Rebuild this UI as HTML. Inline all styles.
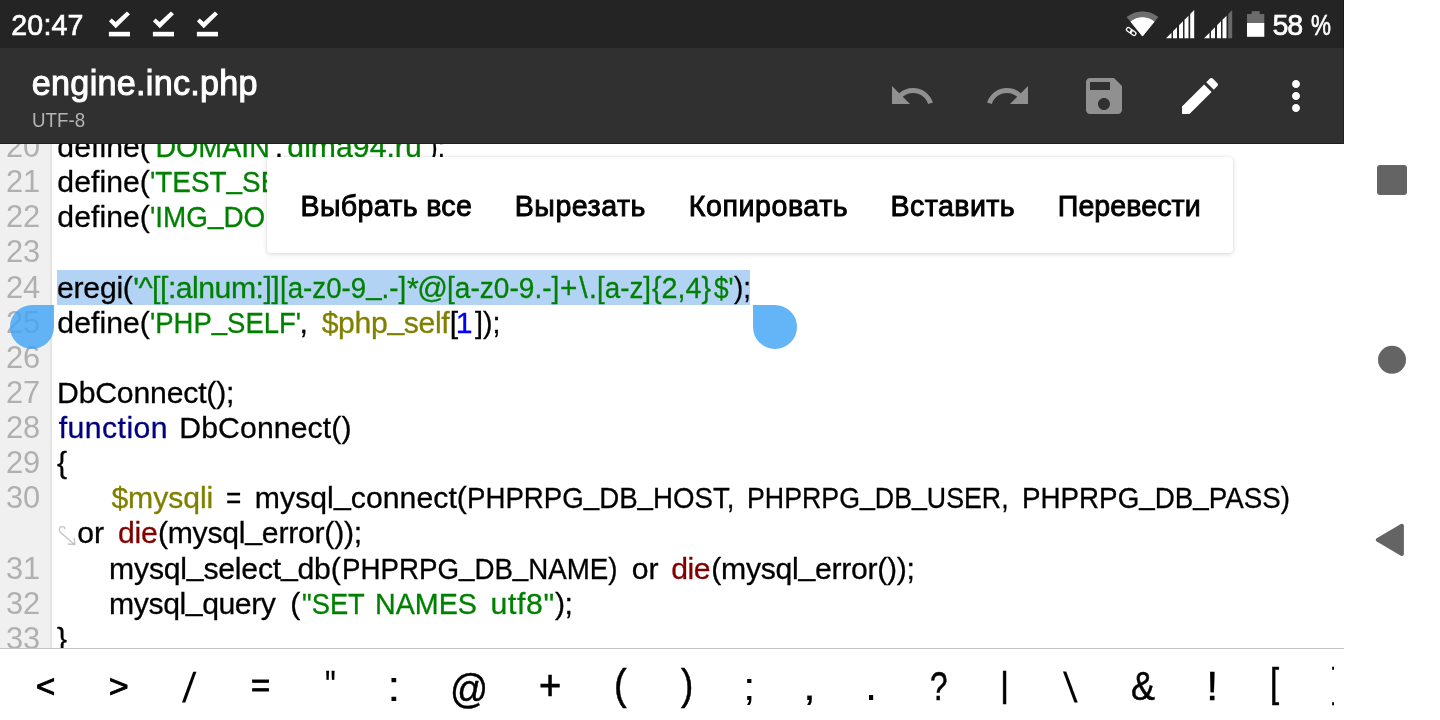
<!DOCTYPE html>
<html lang="ru">
<head>
<meta charset="utf-8">
<title>engine.inc.php</title>
<style>
html,body{margin:0;padding:0;}
body{width:1440px;height:720px;overflow:hidden;background:#fff;position:relative;font-family:"Liberation Sans",sans-serif;}
.L{position:absolute;left:0;top:0;will-change:transform;}
.t{position:absolute;white-space:pre;line-height:60px;font-family:"Liberation Sans",sans-serif;}
.u{position:relative;top:-3.8px;}
#status{position:absolute;left:0;top:0;width:1344px;height:48px;background:#242424;box-sizing:border-box;border-right:1px solid #181818;overflow:hidden;}
#appbar{position:absolute;left:0;top:48px;width:1344px;height:96px;box-sizing:border-box;border-bottom:1px solid #1f1f1f;border-right:1px solid #222;background:#303030;}
#editor{position:absolute;left:0;top:144px;width:1344px;height:504px;background:#fff;overflow:hidden;}
#gutter{position:absolute;left:0;top:0;width:52px;height:504px;background:#f0f0f0;border-right:2px solid #e5e5e5;box-sizing:border-box;}
#sel{position:absolute;left:57px;top:126px;width:693px;height:35px;background:#b3d3f4;}
.handle{position:absolute;width:44px;height:44px;background:rgba(66,165,245,.82);top:161px;}
#hl{left:10px;border-radius:22px 0 22px 22px;}
#hr{left:753px;border-radius:0 22px 22px 22px;}
#popup{position:absolute;left:267px;top:13px;width:966px;height:96px;background:#fff;border-radius:4px;box-shadow:0 1px 5px rgba(0,0,0,.16),0 0 2px rgba(0,0,0,.08);}
#symbols{position:absolute;left:0;top:648px;width:1344px;height:72px;background:#fff;border-top:1px solid #c4c4c4;box-sizing:border-box;overflow:hidden;}
#symclip{position:absolute;left:0;top:0;width:1334px;height:72px;overflow:hidden;}
#nav{position:absolute;left:1344px;top:0;width:96px;height:720px;background:#fff;}
svg{position:absolute;overflow:visible;}
</style>
</head>
<body>
<div id="editor">
<div id="gutter"></div>
<div id="sel"></div>
<div class="L" style="width:1344px;height:504px">
<span class="t" style="left:57.36px;top:-27px;font-size:30.2px;color:#000;letter-spacing:0.034px;-webkit-text-stroke:0.3px #000;">define(</span>
<span class="t" style="left:150.16px;top:-27px;font-size:30.2px;color:#008000;transform:scaleX(0.9467);transform-origin:0 0;-webkit-text-stroke:0.3px #008000;">'DOMAIN'</span>
<span class="t" style="left:274.64px;top:-27px;font-size:30.2px;color:#000;-webkit-text-stroke:0.3px #000;">,</span>
<span class="t" style="left:281.58px;top:-27px;font-size:30.2px;color:#008000;letter-spacing:0.011px;-webkit-text-stroke:0.3px #008000;">'dima94.ru'</span>
<span class="t" style="left:429.00px;top:-27px;font-size:30.2px;color:#000;transform:scaleX(0.8647);transform-origin:0 0;-webkit-text-stroke:0.3px #000;">);</span>
<span class="t" style="left:57.36px;top:8px;font-size:30.2px;color:#000;letter-spacing:0.034px;-webkit-text-stroke:0.3px #000;">define(</span>
<span class="t" style="left:149.79px;top:8px;font-size:30.2px;color:#008000;transform:scaleX(0.9232);transform-origin:0 0;-webkit-text-stroke:0.3px #008000;">'TEST<span class="u">_</span>SERVER',</span>
<span class="t" style="left:57.36px;top:43px;font-size:30.2px;color:#000;letter-spacing:0.034px;-webkit-text-stroke:0.3px #000;">define(</span>
<span class="t" style="left:149.79px;top:43px;font-size:30.2px;color:#008000;transform:scaleX(0.9228);transform-origin:0 0;-webkit-text-stroke:0.3px #008000;">'IMG<span class="u">_</span>DOMAIN',</span>
<span class="t" style="left:57.06px;top:114px;font-size:30.2px;color:#000;letter-spacing:-0.264px;-webkit-text-stroke:0.3px #000;">eregi(</span>
<span class="t" style="left:133.18px;top:114px;font-size:30.2px;color:#008000;letter-spacing:-0.494px;-webkit-text-stroke:0.3px #008000;">'^[[:alnum:]]</span>
<span class="t" style="left:280.37px;top:114px;font-size:30.2px;color:#008000;transform:scaleX(0.9167);transform-origin:0 0;-webkit-text-stroke:0.3px #008000;">[a-z0-9<span class="u">_</span>.-]</span>
<span class="t" style="left:406.93px;top:114px;font-size:30.2px;color:#008000;letter-spacing:-1.393px;-webkit-text-stroke:0.3px #008000;">*@</span>
<span class="t" style="left:447.04px;top:114px;font-size:30.2px;color:#008000;transform:scaleX(0.9304);transform-origin:0 0;-webkit-text-stroke:0.3px #008000;">[a-z0-9.-]</span>
<span class="t" style="left:559.50px;top:114px;font-size:30.2px;color:#008000;transform:scaleX(0.9868);transform-origin:0 0;-webkit-text-stroke:0.3px #008000;">+</span>
<span class="t" style="left:579.20px;top:114px;font-size:30.2px;color:#008000;-webkit-text-stroke:0.3px #008000;">\</span>
<span class="t" style="left:588.69px;top:114px;font-size:30.2px;color:#008000;-webkit-text-stroke:0.3px #008000;">.</span>
<span class="t" style="left:597.26px;top:114px;font-size:30.2px;color:#008000;transform:scaleX(0.9208);transform-origin:0 0;-webkit-text-stroke:0.3px #008000;">[a-z]</span>
<span class="t" style="left:652.45px;top:114px;font-size:30.2px;color:#008000;transform:scaleX(0.9511);transform-origin:0 0;-webkit-text-stroke:0.3px #008000;">{2,4}</span>
<span class="t" style="left:713.80px;top:114px;font-size:30.2px;color:#008000;transform:scaleX(0.8697);transform-origin:0 0;-webkit-text-stroke:0.3px #008000;">$'</span>
<span class="t" style="left:734.40px;top:114px;font-size:30.2px;color:#000;transform:scaleX(0.9203);transform-origin:0 0;-webkit-text-stroke:0.3px #000;">);</span>
<span class="t" style="left:57.36px;top:149px;font-size:30.2px;color:#000;letter-spacing:0.034px;-webkit-text-stroke:0.3px #000;">define(</span>
<span class="t" style="left:150.01px;top:149px;font-size:30.2px;color:#008000;transform:scaleX(0.9109);transform-origin:0 0;-webkit-text-stroke:0.3px #008000;">'PHP<span class="u">_</span>SELF'</span>
<span class="t" style="left:299.60px;top:149px;font-size:30.2px;color:#000;-webkit-text-stroke:0.3px #000;">,</span>
<span class="t" style="left:321.70px;top:149px;font-size:30.2px;color:#808000;letter-spacing:-0.360px;-webkit-text-stroke:0.3px #808000;">$php<span class="u">_</span>self</span>
<span class="t" style="left:449.76px;top:149px;font-size:30.2px;color:#000;-webkit-text-stroke:0.3px #000;">[</span>
<span class="t" style="left:455.87px;top:149px;font-size:30.2px;color:#0000ff;-webkit-text-stroke:0.3px #0000ff;">1</span>
<span class="t" style="left:475.20px;top:149px;font-size:30.2px;color:#000;transform:scaleX(0.9479);transform-origin:0 0;-webkit-text-stroke:0.3px #000;">]);</span>
<span class="t" style="left:57.04px;top:219px;font-size:30.2px;color:#000;letter-spacing:-0.189px;-webkit-text-stroke:0.3px #000;">DbConnect();</span>
<span class="t" style="left:58.70px;top:254px;font-size:30.2px;color:#000080;letter-spacing:0.460px;-webkit-text-stroke:0.3px #000080;">function</span>
<span class="t" style="left:179.34px;top:254px;font-size:30.2px;color:#000;letter-spacing:0.102px;-webkit-text-stroke:0.3px #000;">DbConnect()</span>
<span class="t" style="left:56.93px;top:289px;font-size:30.2px;color:#000;-webkit-text-stroke:0.3px #000;">{</span>
<span class="t" style="left:111.40px;top:324px;font-size:30.2px;color:#808000;letter-spacing:-0.079px;-webkit-text-stroke:0.3px #808000;">$mysqli</span>
<span class="t" style="left:226.27px;top:324px;font-size:30.2px;color:#000;transform:scaleX(0.8675);transform-origin:0 0;-webkit-text-stroke:0.3px #000;">=</span>
<span class="t" style="left:254.81px;top:324px;font-size:30.2px;color:#000;letter-spacing:0.050px;-webkit-text-stroke:0.3px #000;">mysql<span class="u">_</span>connect(</span>
<span class="t" style="left:467.34px;top:324px;font-size:30.2px;color:#000;transform:scaleX(0.9161);transform-origin:0 0;-webkit-text-stroke:0.3px #000;">PHPRPG<span class="u">_</span>DB<span class="u">_</span>HOST,</span>
<span class="t" style="left:747.21px;top:324px;font-size:30.2px;color:#000;transform:scaleX(0.8859);transform-origin:0 0;-webkit-text-stroke:0.3px #000;">PHPRPG<span class="u">_</span>DB<span class="u">_</span>USER,</span>
<span class="t" style="left:1022.33px;top:324px;font-size:30.2px;color:#000;transform:scaleX(0.9195);transform-origin:0 0;-webkit-text-stroke:0.3px #000;">PHPRPG<span class="u">_</span>DB<span class="u">_</span>PASS)</span>
<span class="t" style="left:77.16px;top:359px;font-size:30.2px;color:#000;letter-spacing:0.139px;-webkit-text-stroke:0.3px #000;">or</span>
<span class="t" style="left:118.06px;top:359px;font-size:30.2px;color:#800000;letter-spacing:-0.217px;-webkit-text-stroke:0.3px #800000;">die</span>
<span class="t" style="left:157.88px;top:359px;font-size:30.2px;color:#000;letter-spacing:-0.244px;-webkit-text-stroke:0.3px #000;">(mysql<span class="u">_</span>error());</span>
<span class="t" style="left:109.11px;top:395px;font-size:30.2px;color:#000;letter-spacing:-0.224px;-webkit-text-stroke:0.3px #000;">mysql<span class="u">_</span>select<span class="u">_</span>db(</span>
<span class="t" style="left:341.54px;top:395px;font-size:30.2px;color:#000;transform:scaleX(0.9175);transform-origin:0 0;-webkit-text-stroke:0.3px #000;">PHPRPG<span class="u">_</span>DB<span class="u">_</span>NAME)</span>
<span class="t" style="left:631.66px;top:395px;font-size:30.2px;color:#000;letter-spacing:0.139px;-webkit-text-stroke:0.3px #000;">or</span>
<span class="t" style="left:671.36px;top:395px;font-size:30.2px;color:#800000;letter-spacing:-0.567px;-webkit-text-stroke:0.3px #800000;">die</span>
<span class="t" style="left:711.28px;top:395px;font-size:30.2px;color:#000;letter-spacing:-0.291px;-webkit-text-stroke:0.3px #000;">(mysql<span class="u">_</span>error());</span>
<span class="t" style="left:109.11px;top:430px;font-size:30.2px;color:#000;letter-spacing:-0.431px;-webkit-text-stroke:0.3px #000;">mysql<span class="u">_</span>query</span>
<span class="t" style="left:290.28px;top:430px;font-size:30.2px;color:#000;-webkit-text-stroke:0.3px #000;">(</span>
<span class="t" style="left:301.65px;top:430px;font-size:30.2px;color:#008000;transform:scaleX(0.9045);transform-origin:0 0;-webkit-text-stroke:0.3px #008000;">"SET</span>
<span class="t" style="left:375.26px;top:430px;font-size:30.2px;color:#008000;transform:scaleX(0.9492);transform-origin:0 0;-webkit-text-stroke:0.3px #008000;">NAMES</span>
<span class="t" style="left:490.61px;top:430px;font-size:30.2px;color:#008000;letter-spacing:0.644px;-webkit-text-stroke:0.3px #008000;">utf8"</span>
<span class="t" style="left:555.00px;top:430px;font-size:30.2px;color:#000;letter-spacing:-0.491px;-webkit-text-stroke:0.3px #000;">);</span>
<span class="t" style="left:56.93px;top:465px;font-size:30.2px;color:#000;-webkit-text-stroke:0.3px #000;">}</span>
<span class="t" style="left:5.90px;top:-27px;font-size:30.8px;color:#b0b0b0;">20</span>
<span class="t" style="left:5.90px;top:8px;font-size:30.8px;color:#b0b0b0;">21</span>
<span class="t" style="left:5.90px;top:43px;font-size:30.8px;color:#b0b0b0;">22</span>
<span class="t" style="left:5.90px;top:78px;font-size:30.8px;color:#b0b0b0;">23</span>
<span class="t" style="left:5.90px;top:114px;font-size:30.8px;color:#b0b0b0;">24</span>
<span class="t" style="left:5.90px;top:149px;font-size:30.8px;color:#b0b0b0;">25</span>
<span class="t" style="left:5.90px;top:184px;font-size:30.8px;color:#b0b0b0;">26</span>
<span class="t" style="left:5.90px;top:219px;font-size:30.8px;color:#b0b0b0;">27</span>
<span class="t" style="left:5.90px;top:254px;font-size:30.8px;color:#b0b0b0;">28</span>
<span class="t" style="left:5.90px;top:289px;font-size:30.8px;color:#b0b0b0;">29</span>
<span class="t" style="left:5.90px;top:324px;font-size:30.8px;color:#b0b0b0;">30</span>
<span class="t" style="left:5.90px;top:395px;font-size:30.8px;color:#b0b0b0;">31</span>
<span class="t" style="left:5.90px;top:430px;font-size:30.8px;color:#b0b0b0;">32</span>
<span class="t" style="left:5.90px;top:465px;font-size:30.8px;color:#b0b0b0;">33</span>
</div>
<svg style="left:52px;top:372px" width="30" height="30" viewBox="52 515.5 30 30"><path d="M65 528 C64.3 525.4 59.4 525.3 59.3 529.2 C59.3 531 60.6 532.1 62 533.3 L74.5 543.9 M68.1 543.5 L74.9 544 L74.2 537.9" stroke="#c4c4c4" stroke-width="1.35" fill="none" stroke-linecap="round" stroke-linejoin="round"/></svg>
<div class="handle" id="hl"></div>
<div class="handle" id="hr"></div>
<div id="popup">
<div class="L" style="width:966px;height:96px">
<span class="t" style="left:33.57px;top:19px;font-size:28.6px;color:#000;letter-spacing:0.307px;-webkit-text-stroke:0.9px #000;">Выбрать все</span>
<span class="t" style="left:247.77px;top:19px;font-size:28.6px;color:#000;letter-spacing:0.511px;-webkit-text-stroke:0.9px #000;">Вырезать</span>
<span class="t" style="left:421.77px;top:19px;font-size:28.6px;color:#000;letter-spacing:0.555px;-webkit-text-stroke:0.9px #000;">Копировать</span>
<span class="t" style="left:623.47px;top:19px;font-size:28.6px;color:#000;letter-spacing:0.436px;-webkit-text-stroke:0.9px #000;">Вставить</span>
<span class="t" style="left:790.77px;top:19px;font-size:28.6px;color:#000;letter-spacing:0.060px;-webkit-text-stroke:0.9px #000;">Перевести</span>
</div>
</div>
</div>
<div id="status">
<svg style="left:0;top:0" width="1344" height="48" viewBox="0 0 1344 48">
<g fill="#fff">
<g id="chk"><rect x="108.9" y="31.8" width="21.1" height="4.6"/><polygon points="108.9,21.2 111.7,18.6 115.6,22.1 126.9,11.5 130,14.3 115.8,28.3"/></g>
<g transform="translate(44,0)"><rect x="108.9" y="31.8" width="21.1" height="4.6"/><polygon points="108.9,21.2 111.7,18.6 115.6,22.1 126.9,11.5 130,14.3 115.8,28.3"/></g>
<g transform="translate(88,0)"><rect x="108.9" y="31.8" width="21.1" height="4.6"/><polygon points="108.9,21.2 111.7,18.6 115.6,22.1 126.9,11.5 130,14.3 115.8,28.3"/></g>
</g>
<!-- wifi -->
<path d="M1142.5 36.3 L1127 17.1 A 24.8 24.8 0 0 1 1158 17.1 Z" fill="#6e6e6e" stroke="#6e6e6e" stroke-width="0.6" stroke-linejoin="round"/>
<path d="M1142.5 36 L1130.9 21.7 A 18.5 18.5 0 0 1 1154.1 21.7 Z" fill="#fff" stroke="#fff" stroke-width="0.8" stroke-linejoin="round"/>
<g transform="translate(1131.2,31.5) rotate(36)" fill="none"><g stroke="#242424" stroke-width="3.6"><rect x="-5.4" y="-1.9" width="6" height="3.8" rx="1.9"/><rect x="-0.6" y="-1.9" width="6" height="3.8" rx="1.9"/></g><g stroke="#fff" stroke-width="1.25"><rect x="-5.4" y="-1.9" width="6" height="3.8" rx="1.9"/><rect x="-0.6" y="-1.9" width="6" height="3.8" rx="1.9"/></g></g>
<!-- signal 1 -->
<polygon points="1166.0,38.2 1171.5,38.2 1171.5,32.7" fill="#fff"/>
<polygon points="1173.0,38.2 1177.0,38.2 1177.0,27.2 1173.0,31.2" fill="#fff"/>
<polygon points="1179.0,38.2 1183.0,38.2 1183.0,21.2 1179.0,25.2" fill="#fff"/>
<polygon points="1184.5,38.2 1188.5,38.2 1188.5,15.7 1184.5,19.7" fill="#fff"/>
<polygon points="1190.2,38.2 1194.2,38.2 1194.2,10.0 1190.2,14.0" fill="#fff"/>
<polygon points="1204.0,38.2 1209.5,38.2 1209.5,32.7" fill="#fff"/>
<polygon points="1211.0,38.2 1215.0,38.2 1215.0,27.2 1211.0,31.2" fill="#fff"/>
<polygon points="1217.0,38.2 1221.0,38.2 1221.0,21.2 1217.0,25.2" fill="#fff"/>
<polygon points="1222.5,38.2 1226.5,38.2 1226.5,15.7 1222.5,19.7" fill="#fff"/>
<polygon points="1228.2,38.2 1232.2,38.2 1232.2,10.0 1228.2,14.0" fill="#686868"/>
<!-- battery -->
<rect x="1251.7" y="11.2" width="8" height="3.2" fill="#6b6b6b"/>
<rect x="1247" y="14" width="17.3" height="9.2" fill="#6b6b6b"/>
<rect x="1247" y="23" width="17.3" height="13.8" fill="#fff"/>
</svg>
</div>
<div id="appbar" style="top:48px">
<svg style="left:888px;top:24px" width="48" height="48" viewBox="0 0 24 24"><path fill="#909090" d="M12.5 8c-2.65 0-5.05.99-6.9 2.6L2 7v9h9l-3.62-3.62c1.39-1.16 3.16-1.88 5.12-1.88 3.54 0 6.55 2.31 7.6 5.5l2.37-.78C21.08 11.03 17.15 8 12.5 8z"/></svg>
<svg style="left:984px;top:24px" width="48" height="48" viewBox="0 0 24 24"><path fill="#909090" d="M18.4 10.6C16.55 8.99 14.15 8 11.5 8c-4.65 0-8.58 3.03-9.96 7.22L3.9 16c1.05-3.19 4.05-5.5 7.6-5.5 1.95 0 3.73.72 5.12 1.88L13 16h9V7l-3.6 3.6z"/></svg>
<svg style="left:1080px;top:24px" width="48" height="48" viewBox="0 0 24 24"><path fill="#909090" d="M17 3H5c-1.11 0-2 .9-2 2v14c0 1.1.89 2 2 2h14c1.1 0 2-.9 2-2V7l-4-4zm-5 16c-1.66 0-3-1.34-3-3s1.34-3 3-3 3 1.34 3 3-1.34 3-3 3zm3-10H5V5h10v4z"/></svg>
<svg style="left:1176px;top:24px" width="48" height="48" viewBox="0 0 24 24"><path fill="#fff" d="M3 17.25V21h3.75L17.81 9.94l-3.75-3.75L3 17.25zM20.71 7.04c.39-.39.39-1.02 0-1.41l-2.34-2.34c-.39-.39-1.02-.39-1.41 0l-1.83 1.83 3.75 3.75 1.83-1.83z"/></svg>
<svg style="left:1272px;top:24px" width="48" height="48" viewBox="0 0 24 24"><path fill="#fff" d="M12 8c1.1 0 2-.9 2-2s-.9-2-2-2-2 .9-2 2 .9 2 2 2zm0 2c-1.1 0-2 .9-2 2s.9 2 2 2 2-.9 2-2-.9-2-2-2zm0 6c-1.1 0-2 .9-2 2s.9 2 2 2 2-.9 2-2-.9-2-2-2z"/></svg>
</div>
<div class="L" style="width:1344px;height:144px">
<span class="t" style="left:11.36px;top:-5px;font-size:28.6px;color:#fff;letter-spacing:0.107px;-webkit-text-stroke:0.65px #fff;">20:47</span>
<span class="t" style="left:1272.61px;top:-5px;font-size:28.6px;color:#fff;letter-spacing:-1.259px;-webkit-text-stroke:0.65px #fff;">58</span>
<span class="t" style="left:1311.30px;top:-5px;font-size:28.6px;color:#fff;transform:scaleX(0.7853);transform-origin:0 0;-webkit-text-stroke:0.65px #fff;">%</span>
<span class="t" style="left:31.83px;top:53px;font-size:34.2px;color:#fff;letter-spacing:0.259px;-webkit-text-stroke:1px #fff;">engine.inc.php</span>
<span class="t" style="left:31.93px;top:90px;font-size:20.3px;color:#b4b4b4;transform:scaleX(0.9239);transform-origin:0 0;">UTF-8</span>
</div>
<div id="symbols"><div id="symclip">
<div class="L" style="width:1344px;height:72px">
<span class="t" style="left:35.86px;top:8px;font-size:30.87px;color:#000;transform:scaleX(1.0625);transform-origin:0 0;-webkit-text-stroke:1.0px #000;">&lt;</span>
<span class="t" style="left:108.92px;top:8px;font-size:30.87px;color:#000;transform:scaleX(1.0884);transform-origin:0 0;-webkit-text-stroke:1.0px #000;">&gt;</span>
<span class="t" style="left:181.60px;top:9px;font-size:41.85px;color:#000;-webkit-text-stroke:0.01px #000;transform:skewX(-5.31deg);transform-origin:0 45px;">/</span>
<span class="t" style="left:251.41px;top:7px;font-size:32.87px;color:#000;transform:scaleX(0.9978);transform-origin:0 0;-webkit-text-stroke:0.9px #000;">=</span>
<span class="t" style="left:325.11px;top:6px;font-size:40.96px;color:#000;transform:scaleX(0.7378);transform-origin:0 0;-webkit-text-stroke:0.3px #000;">"</span>
<span class="t" style="left:387.35px;top:8px;font-size:42.15px;color:#000;transform:scaleX(1.1693);transform-origin:0 0;-webkit-text-stroke:0.01px #000;">:</span>
<span class="t" style="left:450.11px;top:10px;font-size:41.26px;color:#000;transform:scaleX(0.9110);transform-origin:0 0;-webkit-text-stroke:0.5px #000;">@</span>
<span class="t" style="left:539.17px;top:7px;font-size:41.7px;color:#000;transform:scaleX(0.9113);transform-origin:0 0;-webkit-text-stroke:0.7px #000;">+</span>
<span class="t" style="left:614.37px;top:6px;font-size:41.81px;color:#000;transform:scaleX(0.9099);transform-origin:0 0;-webkit-text-stroke:0.5px #000;">(</span>
<span class="t" style="left:681.15px;top:6px;font-size:41.81px;color:#000;transform:scaleX(0.8844);transform-origin:0 0;-webkit-text-stroke:0.5px #000;">)</span>
<span class="t" style="left:743.41px;top:7px;font-size:39.43px;color:#000;transform:scaleX(1.1342);transform-origin:0 0;-webkit-text-stroke:0.01px #000;">;</span>
<span class="t" style="left:803.38px;top:8px;font-size:38.4px;color:#000;transform:scaleX(1.2083);transform-origin:0 0;-webkit-text-stroke:0.2px #000;">,</span>
<span class="t" style="left:865.28px;top:5px;font-size:46.54px;color:#000;transform:scaleX(0.9411);transform-origin:0 0;-webkit-text-stroke:0.01px #000;">.</span>
<span class="t" style="left:929.56px;top:7px;font-size:41.53px;color:#000;transform:scaleX(0.7609);transform-origin:0 0;-webkit-text-stroke:0.5px #000;">?</span>
<span class="t" style="left:1000.30px;top:6px;font-size:35.57px;color:#000;transform:scaleX(0.9897);transform-origin:0 0;-webkit-text-stroke:0.5px #000;">|</span>
<span class="t" style="left:1066.35px;top:9px;font-size:42.12px;color:#000;-webkit-text-stroke:0.01px #000;transform:skewX(5.68deg);transform-origin:0 45px;">\</span>
<span class="t" style="left:1130.72px;top:7px;font-size:40.35px;color:#000;transform:scaleX(0.8922);transform-origin:0 0;-webkit-text-stroke:0.5px #000;">&amp;</span>
<span class="t" style="left:1206.05px;top:7px;font-size:41.53px;color:#000;transform:scaleX(1.0788);transform-origin:0 0;-webkit-text-stroke:0.3px #000;">!</span>
<span class="t" style="left:1269.79px;top:5px;font-size:40.18px;color:#000;transform:scaleX(0.8191);transform-origin:0 0;-webkit-text-stroke:0.5px #000;">[</span>
<span class="t" style="left:1332.05px;top:5px;font-size:40.18px;color:#000;transform:scaleX(0.8191);transform-origin:0 0;-webkit-text-stroke:0.5px #000;">]</span>
</div>
</div></div>
<div id="nav">
<svg style="left:0;top:0" width="96" height="720" viewBox="0 0 96 720">
<rect x="33" y="165" width="30" height="30" rx="3" fill="#646464"/>
<circle cx="48" cy="359.8" r="14" fill="#646464"/>
<polygon points="57.9,525.75 57.9,554.1 33.75,539.9" fill="#646464" stroke="#646464" stroke-width="4" stroke-linejoin="round"/>
</svg>
</div>
</body>
</html>
